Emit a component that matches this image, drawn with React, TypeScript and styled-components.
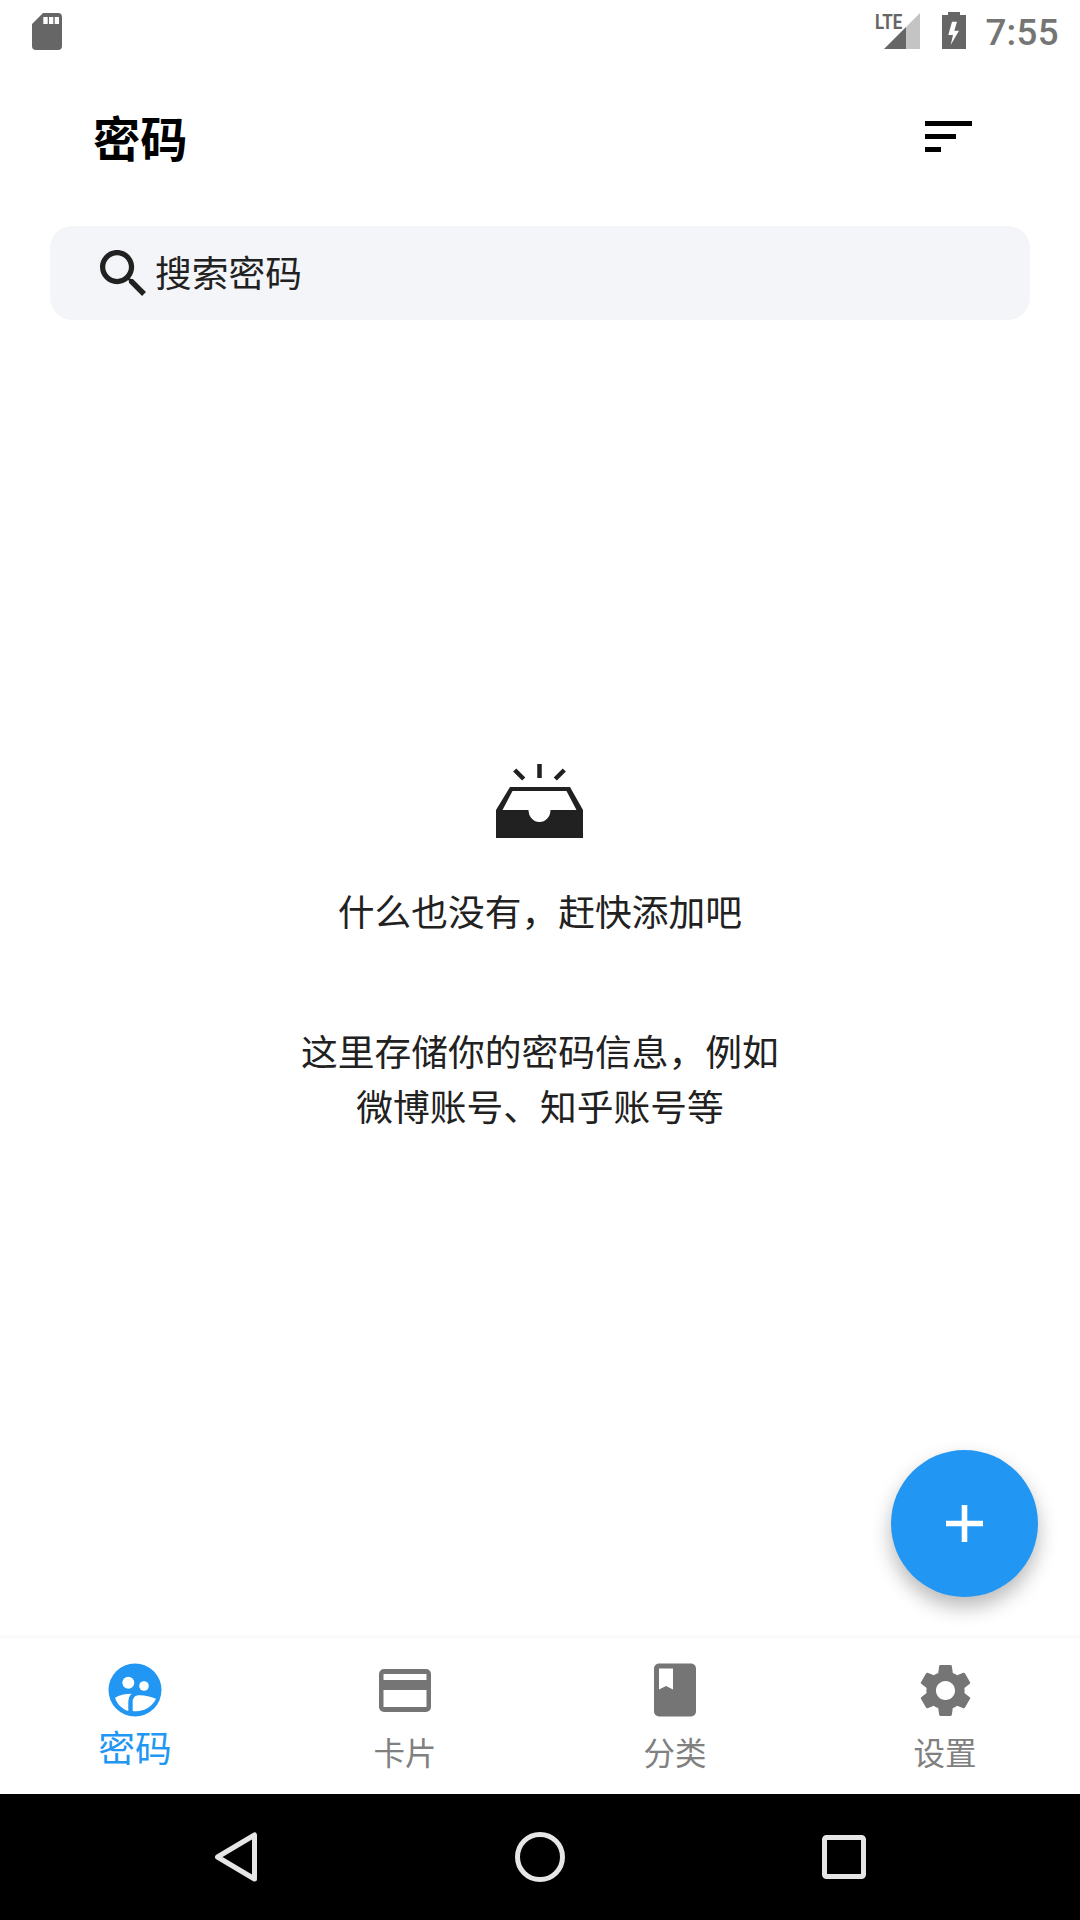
import React from 'react';
import styled, { createGlobalStyle } from 'styled-components';

const GlobalStyle = createGlobalStyle`
    html, body {
        margin: 0;
        padding: 0;
        background: #fff;
    }
    * {
        box-sizing: border-box;
    }
`;

const Page = styled.div`
    width: 1080px;
    height: 1920px;
    display: flex;
    flex-direction: column;
    background: #fff;
    color: #212121;
    font-family: 'Noto Sans CJK SC', 'Noto Sans', sans-serif;
    overflow: hidden;
`;

const StatusBar = styled.div`
    height: 63px;
    flex: none;
    display: flex;
    justify-content: space-between;
    padding: 12px 21px 0 32px;
    color: #666;
`;

const StatusRight = styled.div`
    display: flex;
    align-items: flex-start;
`;

const SignalWrap = styled.div`
    position: relative;
    width: 36px;
    height: 36px;
    margin-top: 1px;
    margin-right: 22px;
`;

const LteBadge = styled.span`
    position: absolute;
    left: -9px;
    top: 1px;
    width: 23px;
    font: 700 20px/16px Roboto, sans-serif;
    color: #666;
    transform: scaleX(0.85);
    transform-origin: left center;
`;

const Clock = styled.span`
    margin-left: 19px;
    font: 500 36.75px/42px Roboto, sans-serif;
    color: #757575;
    letter-spacing: 0.3px;
`;

const Header = styled.div`
    height: 154px;
    flex: none;
    display: flex;
    align-items: center;
    justify-content: space-between;
    padding: 0 108px 0 93px;
`;

const Title = styled.h1`
    margin: 0 0 7px;
    font-size: 47.25px;
    font-weight: 700;
    line-height: 60px;
    color: #000;
`;

const SortIcon = styled.svg`
    margin-bottom: 7px;
`;

const SearchBar = styled.div`
    height: 94px;
    flex: none;
    margin: 9px 50px 0;
    padding-left: 50px;
    display: flex;
    align-items: center;
    gap: 9px;
    border-radius: 22px;
    background: #f4f5f9;
    font-size: 36.75px;
    line-height: 50px;
`;

const SearchText = styled.span`
    margin-bottom: 5px;
`;

const Main = styled.main`
    position: relative;
    flex: 1;
    display: flex;
    flex-direction: column;
    align-items: center;
    padding-top: 444px;
`;

const TrayIcon = styled.svg`
    margin-right: 1px;
`;

const EmptyTitle = styled.div`
    margin-top: 45px;
    font-size: 36.75px;
    line-height: 55px;
`;

const EmptyHint = styled.div`
    margin-top: 85px;
    font-size: 36.75px;
    line-height: 55px;
    text-align: center;
`;

const Fab = styled.button`
    position: absolute;
    right: 42px;
    bottom: 41px;
    width: 147px;
    height: 147px;
    display: flex;
    align-items: center;
    justify-content: center;
    padding: 0;
    border: 0;
    border-radius: 50%;
    background: #2196f3;
    box-shadow: 0 10px 20px rgba(0, 0, 0, 0.28);
`;

const TabBar = styled.nav`
    height: 156px;
    flex: none;
    display: grid;
    grid-template-columns: repeat(4, 1fr);
    background: #fff;
    box-shadow: 0 -2px 3px rgba(0, 0, 0, 0.03);
`;

const Tab = styled.div`
    display: flex;
    flex-direction: column;
    align-items: center;
    padding-top: 25px;
`;

const TabIcon = styled.div`
    height: 54px;
    display: flex;
    align-items: center;
    justify-content: center;
`;

const TabLabel = styled.span<{ $active?: boolean }>`
    margin-top: ${(p) => (p.$active ? '9px' : '14px')};
    font-size: ${(p) => (p.$active ? '36.75px' : '31.5px')};
    line-height: 40px;
    color: ${(p) => (p.$active ? '#2196f3' : '#808080')};
`;

const SystemNav = styled.div`
    height: 126px;
    flex: none;
    display: grid;
    grid-template-columns: repeat(3, 1fr);
    padding: 0 84px;
    background: #000;
`;

const SystemKey = styled.div`
    display: flex;
    align-items: center;
    justify-content: center;
`;

const SdCardIcon = () => (
    <svg width="30" height="38" viewBox="0 0 30 38">
        <path
            fill="#666"
            fillRule="evenodd"
            d="M11 1H26a4 4 0 0 1 4 4V34a4 4 0 0 1-4 4H4a4 4 0 0 1-4-4V12ZM11.3 5V12H15.7V5ZM17 5V12H21.3V5ZM22.7 5V12H27V5Z"
        />
    </svg>
);

const SignalIcon = () => (
    <svg width="36" height="36" viewBox="0 0 36 36">
        <path fill="#666" d="M0 36 22 14V36Z" />
        <path fill="#c4c4c4" d="M22 14 36 0V36H22Z" />
    </svg>
);

const BatteryIcon = () => (
    <svg width="24" height="37" viewBox="0 0 24 37">
        <path
            fill="#666"
            fillRule="evenodd"
            d="M6 0H18V3H24V37H0V3H6ZM10 9.7 6.3 23H11L8.7 33 17 18.7H12.3L15 9.7Z"
        />
    </svg>
);

const SortBars = () => (
    <SortIcon width="47" height="31" viewBox="0 0 47 31">
        <path fill="#000" d="M0 0H47V5H0ZM0 13H31V18H0ZM0 26H16V31H0Z" />
    </SortIcon>
);

const SearchIcon = () => (
    <svg width="46" height="46" viewBox="3 3 17.5 17.5">
        <path
            fill="#212121"
            d="M15.5 14h-.79l-.28-.27C15.41 12.59 16 11.11 16 9.5 16 5.91 13.09 3 9.5 3S3 5.91 3 9.5 5.91 16 9.5 16c1.61 0 3.09-.59 4.23-1.57l.27.28v.79l5 4.99L20.49 19l-4.99-5zm-6 0C7.01 14 5 11.99 5 9.5S7.01 5 9.5 5 14 7.01 14 9.5 11.99 14 9.5 14z"
        />
    </svg>
);

const EmptyTrayIcon = () => (
    <TrayIcon width="87" height="74" viewBox="0 0 87 74">
        <path
            fill="#212121"
            fillRule="evenodd"
            d="M14 23H74L87 46V74H0V46ZM16.5 27 6.5 46H32.5A11 12 0 0 0 54.5 46H80.5L70.5 27Z"
        />
        <path
            stroke="#212121"
            strokeWidth="4.5"
            fill="none"
            d="M43.5 0V14M18.7 6 27.7 15M68.3 6 59.3 15"
        />
    </TrayIcon>
);

const PeopleIcon = () => (
    <svg width="54" height="54" viewBox="0 0 54 54">
        <circle cx="27" cy="27" r="26.5" fill="#2196f3" />
        <circle cx="20.3" cy="19.7" r="6" fill="#fff" />
        <circle cx="36" cy="23" r="4.8" fill="#fff" />
        <path fill="#fff" d="M7 34.7C11 32 17 30.7 23.7 30.7 21 33 20.3 36 20.3 40V48C14 46 9 41 7 34.7Z" />
        <path fill="#fff" d="M24.7 48V38C25 35 27 32.5 30.3 32.3 36 32 42 33.5 48 35.7 44 44 35 49.5 24.7 48Z" />
    </svg>
);

const CardIcon = () => (
    <svg width="52" height="43" viewBox="0 0 52 43">
        <path
            fill="#757575"
            fillRule="evenodd"
            d="M5 0H47a5 5 0 0 1 5 5V38a5 5 0 0 1-5 5H5a5 5 0 0 1-5-5V5a5 5 0 0 1 5-5ZM4.5 5V11H47.5V5ZM4.5 21V38H47.5V21Z"
        />
    </svg>
);

const BookIcon = () => (
    <svg width="42" height="54" viewBox="0 0 42 53">
        <path
            fill="#757575"
            fillRule="evenodd"
            d="M5 0H37a5 5 0 0 1 5 5V48a5 5 0 0 1-5 5H5a5 5 0 0 1-5-5V5a5 5 0 0 1 5-5ZM5 5V26L12 22.5 19 26V5Z"
        />
    </svg>
);

const GearIcon = () => (
    <svg width="51" height="53" viewBox="2.5 2 19 20">
        <path
            fill="#757575"
            d="M19.14 12.94c.04-.3.06-.61.06-.94 0-.32-.02-.64-.07-.94l2.03-1.58c.18-.14.23-.41.12-.61l-1.92-3.32c-.12-.22-.37-.29-.59-.22l-2.39.96c-.5-.38-1.03-.7-1.62-.94l-.36-2.54c-.04-.24-.24-.41-.48-.41h-3.84c-.24 0-.43.17-.47.41l-.36 2.54c-.59.24-1.13.57-1.62.94l-2.39-.96c-.22-.08-.47 0-.59.22L2.74 8.87c-.12.21-.08.47.12.61l2.03 1.58c-.05.3-.09.63-.09.94s.02.64.07.94l-2.03 1.58c-.18.14-.23.41-.12.61l1.92 3.32c.12.22.37.29.59.22l2.39-.96c.5.38 1.03.7 1.62.94l.36 2.54c.05.24.24.41.48.41h3.84c.24 0 .44-.17.47-.41l.36-2.54c.59-.24 1.13-.56 1.62-.94l2.39.96c.22.08.47 0 .59-.22l1.92-3.32c.12-.22.07-.47-.12-.61l-2.01-1.58zM12 15.6c-1.98 0-3.6-1.62-3.6-3.6s1.62-3.6 3.6-3.6 3.6 1.62 3.6 3.6-1.62 3.6-3.6 3.6z"
        />
    </svg>
);

const PlusIcon = () => (
    <svg width="37" height="37" viewBox="0 0 37 37">
        <path fill="#fff" d="M15.7 0H21.3V15.7H37V21.3H21.3V37H15.7V21.3H0V15.7H15.7Z" />
    </svg>
);

const BackKey = () => (
    <svg width="44" height="50" viewBox="0 0 44 50">
        <path
            fill="none"
            stroke="#e6e6e6"
            strokeWidth="5"
            strokeLinejoin="round"
            d="M3.5 25 40.5 3V47Z"
        />
    </svg>
);

const HomeKey = () => (
    <svg width="50" height="50" viewBox="0 0 50 50">
        <circle cx="25" cy="25" r="22.5" fill="none" stroke="#e6e6e6" strokeWidth="5" />
    </svg>
);

const RecentKey = () => (
    <svg width="44" height="44" viewBox="0 0 44 44">
        <rect x="2.5" y="2.5" width="39" height="39" rx="2" fill="none" stroke="#e6e6e6" strokeWidth="5" />
    </svg>
);

const tabs = [
    { label: '密码', icon: <PeopleIcon />, active: true },
    { label: '卡片', icon: <CardIcon /> },
    { label: '分类', icon: <BookIcon /> },
    { label: '设置', icon: <GearIcon /> },
];

export default function App() {
    return (
        <Page>
            <GlobalStyle />
            <StatusBar>
                <SdCardIcon />
                <StatusRight>
                    <SignalWrap>
                        <SignalIcon />
                        <LteBadge>LTE</LteBadge>
                    </SignalWrap>
                    <BatteryIcon />
                    <Clock>7:55</Clock>
                </StatusRight>
            </StatusBar>
            <Header>
                <Title>密码</Title>
                <SortBars />
            </Header>
            <SearchBar>
                <SearchIcon />
                <SearchText>搜索密码</SearchText>
            </SearchBar>
            <Main>
                <EmptyTrayIcon />
                <EmptyTitle>什么也没有，赶快添加吧</EmptyTitle>
                <EmptyHint>
                    这里存储你的密码信息，例如
                    <br />
                    微博账号、知乎账号等
                </EmptyHint>
                <Fab>
                    <PlusIcon />
                </Fab>
            </Main>
            <TabBar>
                {tabs.map((tab) => (
                    <Tab key={tab.label}>
                        <TabIcon>{tab.icon}</TabIcon>
                        <TabLabel $active={tab.active}>{tab.label}</TabLabel>
                    </Tab>
                ))}
            </TabBar>
            <SystemNav>
                <SystemKey>
                    <BackKey />
                </SystemKey>
                <SystemKey>
                    <HomeKey />
                </SystemKey>
                <SystemKey>
                    <RecentKey />
                </SystemKey>
            </SystemNav>
        </Page>
    );
}
